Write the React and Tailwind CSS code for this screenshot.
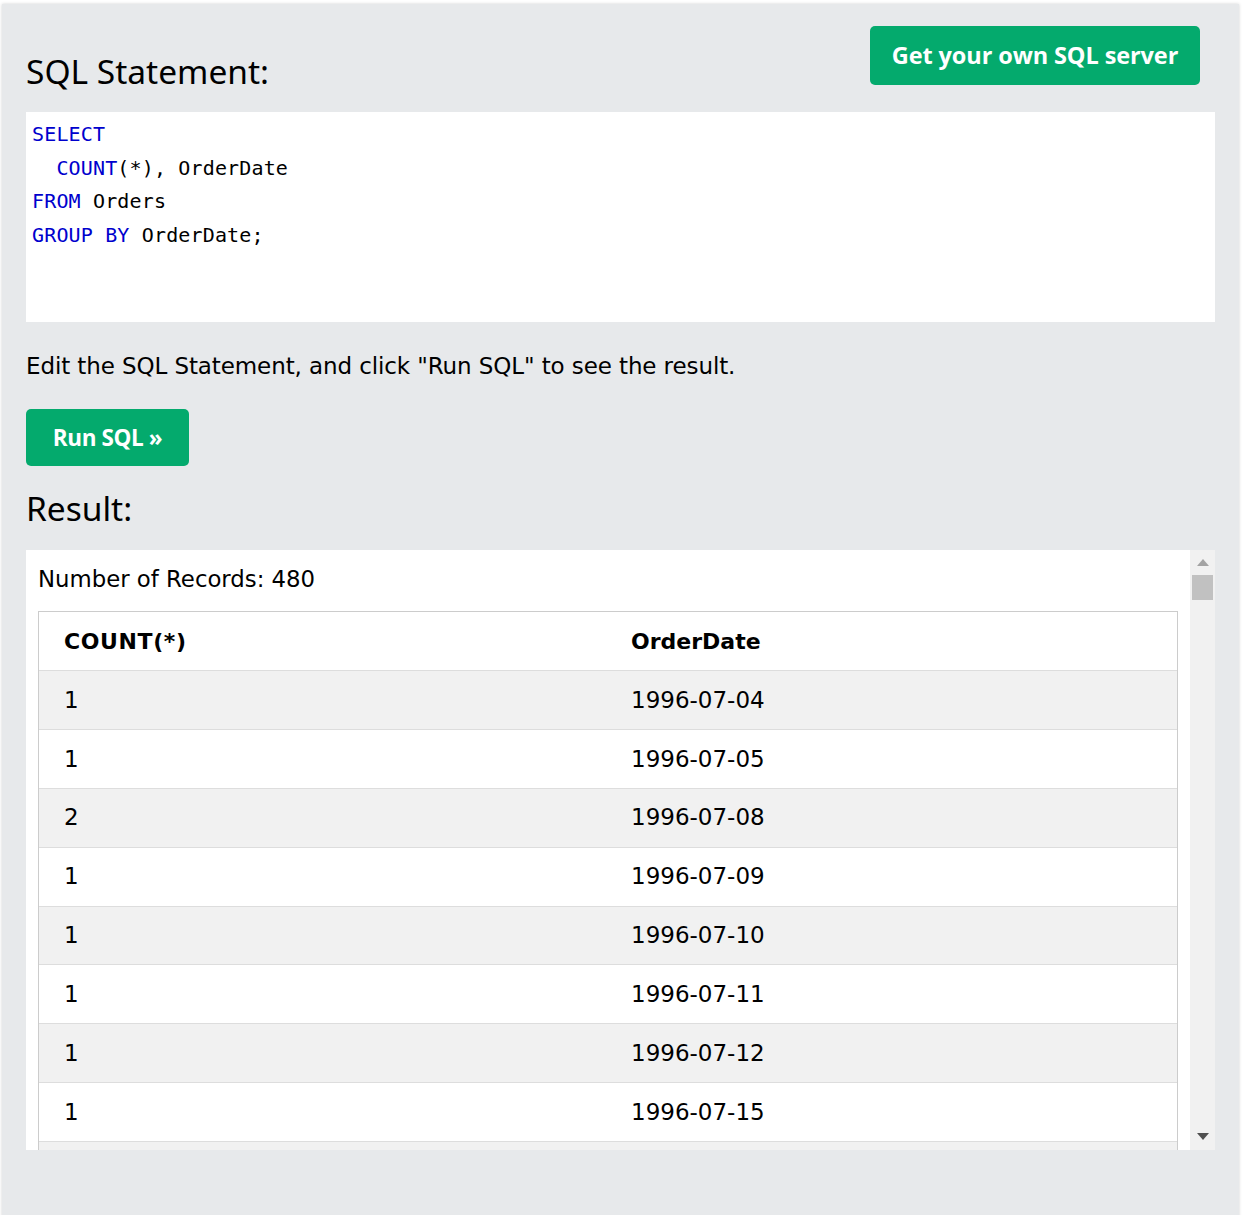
import React from "react";

const rows = [
  ["1", "1996-07-04"],
  ["1", "1996-07-05"],
  ["2", "1996-07-08"],
  ["1", "1996-07-09"],
  ["1", "1996-07-10"],
  ["1", "1996-07-11"],
  ["1", "1996-07-12"],
  ["1", "1996-07-15"],
  ["1", "1996-07-16"],
  ["1", "1996-07-17"],
];

const body = '"DejaVu Sans", Verdana, sans-serif';
const head = '"Noto Sans", "Open Sans", sans-serif';
const btn = '"Open Sans", "Noto Sans", sans-serif';

export default function App() {
  return (
    <div className="bg-white min-h-[1215px] pl-[2px] pt-[4px] pr-[4px]">
      <div className="bg-[#e7e9eb] shadow-[0_0_3px_rgba(0,0,0,0.18)] pl-[24px] pr-[24px] pt-[22px] pb-[70px]">
        {/* header row */}
        <div className="flex justify-between items-start">
          <h2 className="mt-[23px] text-[33.5px] leading-[44px] text-black font-normal" style={{ fontFamily: head }}>
            SQL Statement:
          </h2>
          <button
            className="mr-[15px] h-[59px] w-[330px] rounded-[5px] bg-[#04aa6d] text-white text-[23.5px] font-bold"
            style={{ fontFamily: btn, letterSpacing: "-0.1px" }}
          >
            Get your own SQL server
          </button>
        </div>

        {/* code box */}
        <div
          className="mt-[19px] h-[210px] bg-white pl-[6px] pt-[6px] text-[20px] leading-[33.5px] text-black"
          style={{ fontFamily: '"DejaVu Sans Mono", "Liberation Mono", monospace', letterSpacing: "0.15px" }}
        >
          <div><span className="text-[#0000cd]">SELECT</span></div>
          <div>&nbsp;&nbsp;<span className="text-[#0000cd]">COUNT</span>(*), OrderDate</div>
          <div><span className="text-[#0000cd]">FROM</span> Orders</div>
          <div><span className="text-[#0000cd]">GROUP</span> <span className="text-[#0000cd]">BY</span> OrderDate;</div>
        </div>

        <p
          className="mt-[26px] text-[23px] leading-[36px] text-black"
          style={{ fontFamily: body, letterSpacing: "-0.1px" }}
        >
          Edit the SQL Statement, and click "Run SQL" to see the result.
        </p>

        <button
          className="mt-[25px] h-[57px] w-[163px] rounded-[5px] bg-[#04aa6d] text-white text-[22.5px] font-bold"
          style={{ fontFamily: btn, letterSpacing: "-0.4px" }}
        >
          Run SQL »
        </button>

        <h2 className="mt-[20px] text-[33.5px] leading-[44px] text-black font-normal" style={{ fontFamily: head }}>
          Result:
        </h2>

        {/* result box */}
        <div className="mt-[20px] h-[600px] bg-white flex">
          <div className="flex-1 overflow-hidden pl-[12px] pr-[12px]">
            <div
              className="pt-[12px] h-[61px] text-[22.8px] leading-[34px] text-[#000]"
              style={{ fontFamily: body }}
            >
              Number of Records: 480
            </div>
            <div
              className="border-l border-r border-t border-[#cccccc] text-[23px] text-black"
              style={{ fontFamily: body }}
            >
              <div className="flex h-[59px] items-center border-b border-[#dddddd] font-bold text-[22px]">
                <div className="w-1/2 pl-[25px]" style={{ letterSpacing: "0.6px" }}>COUNT(*)</div>
                <div className="w-1/2 pl-[23px]">OrderDate</div>
              </div>
              {rows.map((r, i) => (
                <div
                  key={i}
                  className={
                    "flex h-[58.875px] items-center border-b border-[#dddddd] " +
                    (i % 2 === 0 ? "bg-[#f1f1f1]" : "bg-white")
                  }
                >
                  <div className="w-1/2 pl-[25px]">{r[0]}</div>
                  <div className="w-1/2 pl-[23px]">{r[1]}</div>
                </div>
              ))}
            </div>
          </div>
          {/* scrollbar */}
          <div className="w-[25px] bg-[#f1f1f1] flex flex-col items-center">
            <svg className="mt-[9px]" width="12" height="8" viewBox="0 0 12 8">
              <polygon points="6,0 12,7 0,7" fill="#a3a3a3" />
            </svg>
            <div className="mt-[8px] w-[21px] h-[25px] bg-[#c1c1c1]" />
            <div className="flex-1" />
            <svg className="mb-[9px]" width="12" height="8" viewBox="0 0 12 8">
              <polygon points="0,0 12,0 6,7" fill="#505050" />
            </svg>
          </div>
        </div>
      </div>
    </div>
  );
}
